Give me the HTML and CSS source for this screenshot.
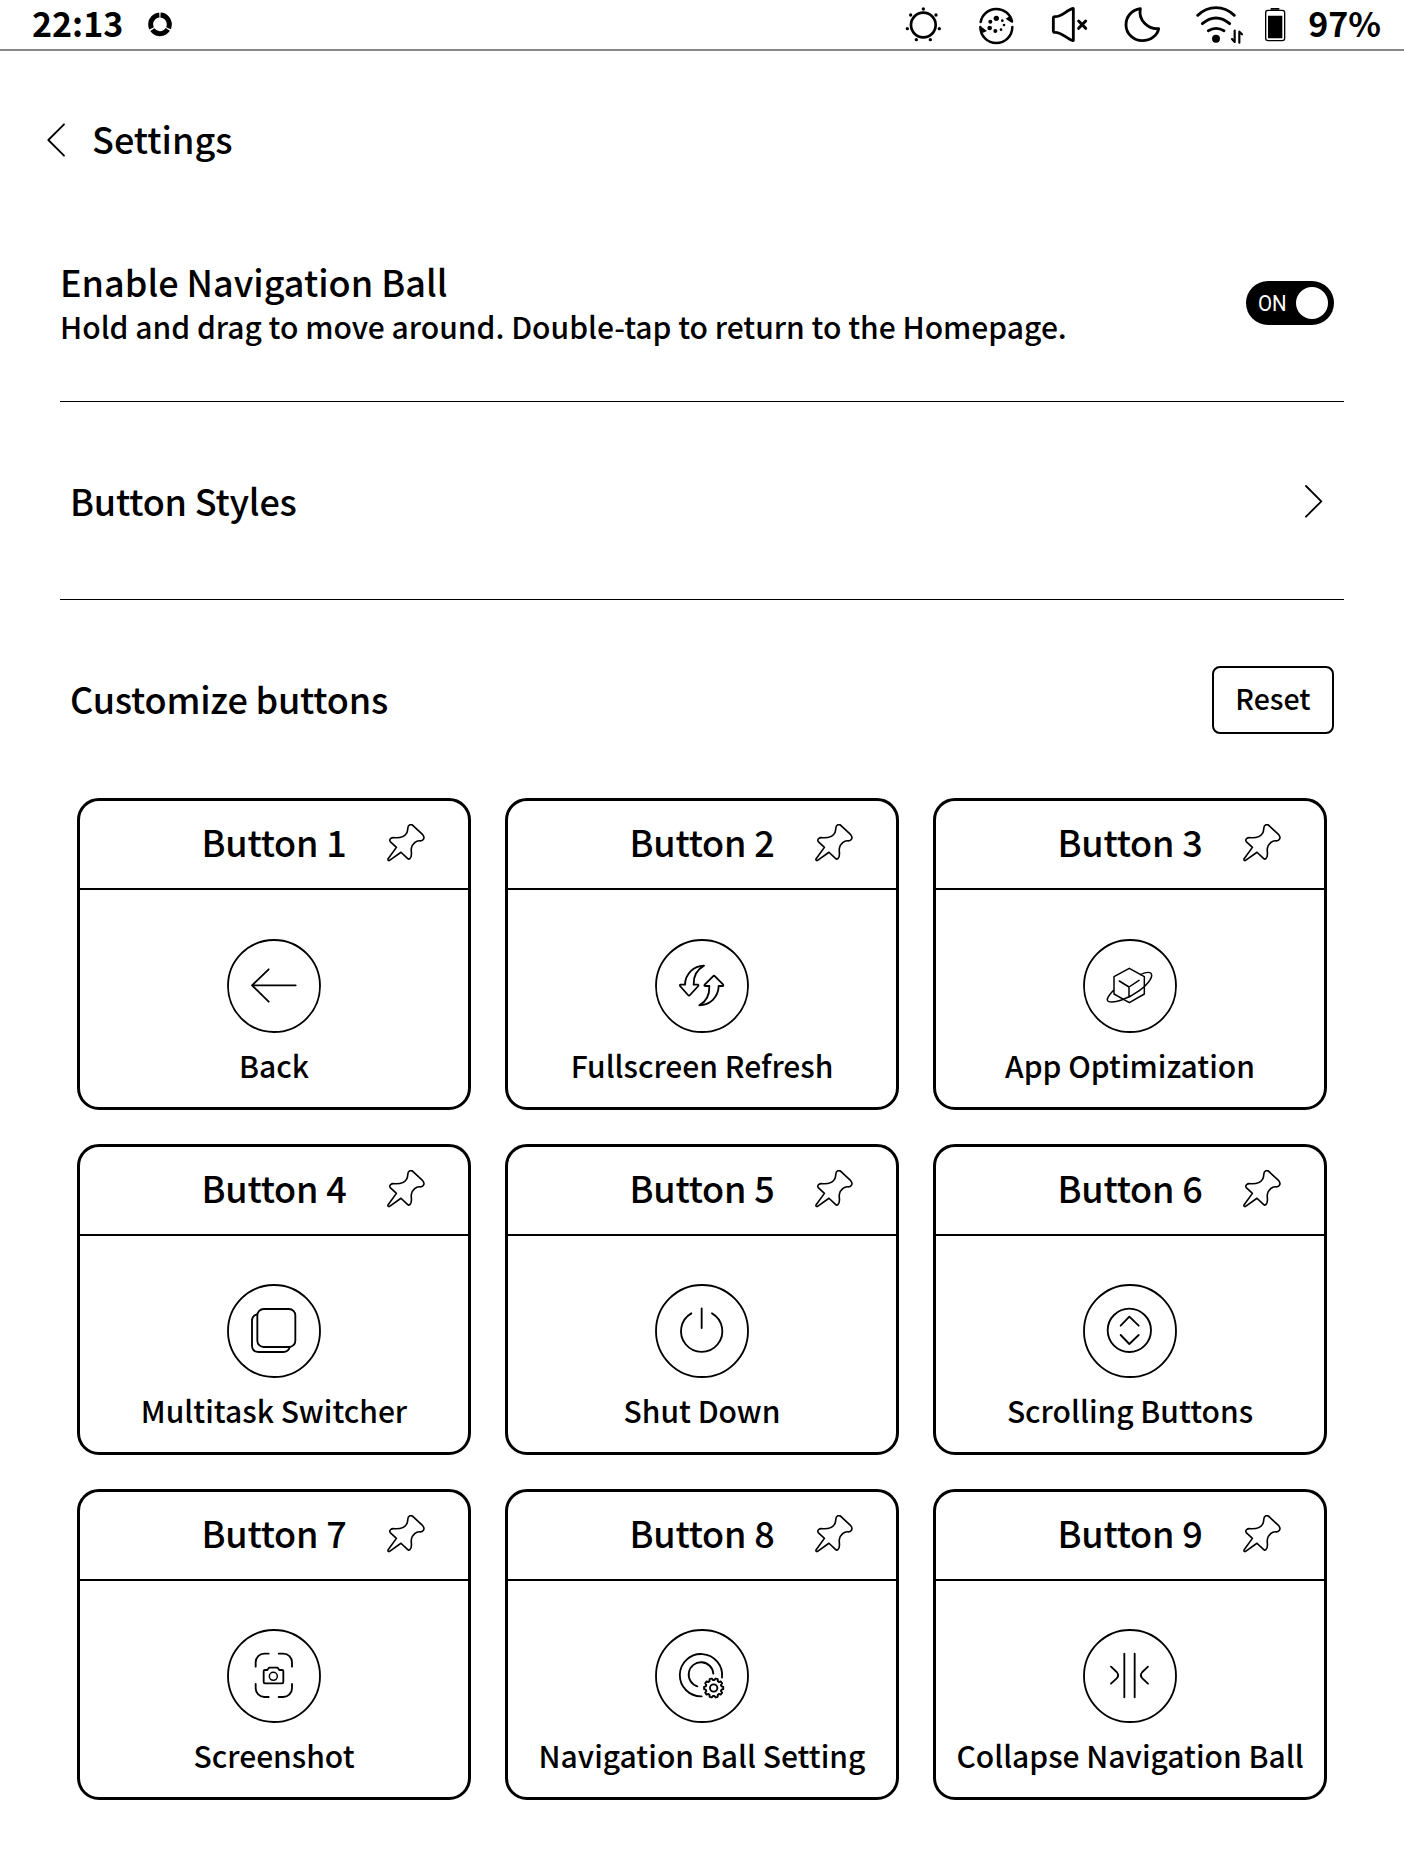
FILE: index.html
```html
<!DOCTYPE html>
<html lang="en">
<head>
<meta charset="utf-8">
<title>Navigation Ball Settings</title>
<link rel="stylesheet" href="styles.css">
</head>
<body>
<svg class="defs" width="0" height="0" aria-hidden="true">
  <symbol id="pin" viewBox="0 0 117 117"><path d="M64 14C64 2 75-2 81 6L110 33C118 42 112 52 103 52C91 49 77 62 75 75C73 87 80 99 70 107Q67 110 63 106L43 87L8 112Q2 114 3 108L29 72L10 54C6 48 12 41 22 42C36 43 53 41 60 29C64 22 63 19 64 14Z"/></symbol>
  <path id="tooth" d="M0-24L2.5-23.9L5.5-28.5L12.3-26.3L12-20.8L14.1-19.4"/>
</svg>

<header class="status">
  <span class="time">22:13</span>
  <svg class="ring" width="28" height="49" viewBox="439 0 84 147"><circle cx="481" cy="73" r="28" pathLength="120" stroke-width="15" stroke-dasharray="37 3" transform="rotate(-87 481 73)"/></svg>
  <div class="tray">
    <svg width="50" height="49" viewBox="30 0 150 147"><circle cx="100" cy="75" r="37" stroke-width="8"/><g class="solid"><circle cx="100" cy="27" r="5"/><circle cx="138" cy="45" r="5"/><circle cx="148" cy="86" r="5"/><circle cx="121" cy="119" r="5"/><circle cx="79" cy="119" r="5"/><circle cx="52" cy="86" r="5"/><circle cx="62" cy="45" r="5"/></g></svg>
    <svg width="45" height="49" viewBox="255 0 135 147"><path stroke-width="7.500" d="M272 66A48 48 0 0 1 366 64M271 81A48 48 0 0 0 367 81"/><g class="solid"><path d="M347 56L360 48L369 68L362 67ZM270 82L276 82L291 93L278 99Z"/><circle cx="319" cy="55" r="8"/><circle cx="301" cy="65" r="6"/><circle cx="337" cy="62" r="4"/><circle cx="342" cy="75" r="4"/><circle cx="333" cy="89" r="4"/><circle cx="316" cy="93" r="6"/><circle cx="299" cy="84" r="7"/></g></svg>
    <svg width="45" height="49" viewBox="465 0 135 147"><path stroke-width="8.500" d="M490 55Q490 50 495 50C512 50 523 38 538 30Q550 24 550 26V121Q550 124 538 117C523 108 512 97 495 97Q490 97 490 92Z"/><path stroke-width="9" d="M566 63L587 85M587 63L566 85"/></svg>
    <svg width="50" height="49" viewBox="675 0 150 147"><path stroke-width="8.500" d="M751 26C724 30 708 51 708 74C708 101 730 122 757 122C782 122 802 106 806 86C776 89 744 62 751 26Z"/></svg>
    <svg width="50" height="49" viewBox="900 0 150 147"><path stroke-width="8.500" d="M923 46Q948 23 978 23Q1008 23 1033 46M937 71Q957 54 978 54Q999 54 1019 71M955 92Q978 78 1002 92"/><circle class="solid" cx="978" cy="116" r="12"/><path stroke-width="6.500" d="M1034 92V126L1026 117M1048 128V95L1056 103"/></svg>
    <svg width="22" height="49" viewBox="1125 0 66 147"><rect x="1127" y="31" width="57" height="91" rx="7" stroke-width="4"/><path class="solid" d="M1134 47H1177V115H1134ZM1142 24H1168V29H1142Z"/></svg>
    <span class="battery">97%</span>
  </div>
</header>

<nav class="titlebar">
  <svg width="20" height="34" viewBox="0 0 60 102"><path stroke-width="5.500" d="M54 4L7 51L54 98"/></svg>
  <h1>Settings</h1>
</nav>

<main>
  <section class="row enable">
    <div>
      <h2>Enable Navigation Ball</h2>
      <p>Hold and drag to move around. Double-tap to return to the Homepage.</p>
    </div>
    <div class="toggle"><span>ON</span><i></i></div>
  </section>
  <section class="row styles">
    <h2>Button Styles</h2>
    <svg width="20" height="34" viewBox="0 0 60 102"><path stroke-width="5.500" d="M6 6L52 52L6 98"/></svg>
  </section>
  <section class="row customize">
    <h2>Customize buttons</h2>
    <button class="reset">Reset</button>
  </section>

  <section class="grid">
    <article class="card">
      <header><h3>Button 1</h3><svg class="pin"><use href="#pin"/></svg></header>
      <svg class="glyph" viewBox="0 0 282 282"><circle cx="141" cy="141" r="138"/><path d="M206 139H75M125 91L75 139L125 188"/></svg>
      <p>Back</p>
    </article>
    <article class="card">
      <header><h3>Button 2</h3><svg class="pin"><use href="#pin"/></svg></header>
      <svg class="glyph" viewBox="0 0 282 282"><circle cx="141" cy="141" r="138"/><path d="M147 80C116 81 91 104 90 137H76Q74 138 75 141L99 168Q102 172 105 168L130 141Q131 138 129 137H116C115 112 124 93 147 80ZM133 199C155 187 164 167 163 141H150Q147 140 149 137L174 112Q177 109 180 112L204 136Q206 139 204 141H191C190 175 165 198 133 199Z"/></svg>
      <p>Fullscreen Refresh</p>
    </article>
    <article class="card">
      <header><h3>Button 3</h3><svg class="pin"><use href="#pin"/></svg></header>
      <svg class="glyph" viewBox="0 0 282 282"><circle cx="141" cy="141" r="138"/><path class="fine" d="M139 88L184 113V165L139 191L93 165V113ZM109 126L138 144L168 124M138 144V175M93 152C76 170 68 182 76 187C92 194 135 180 170 154C200 132 212 110 203 102C197 98 185 101 172 107"/></svg>
      <p>App Optimization</p>
    </article>
    <article class="card">
      <header><h3>Button 4</h3><svg class="pin"><use href="#pin"/></svg></header>
      <svg class="glyph" viewBox="0 0 282 282"><circle cx="141" cy="141" r="138"/><rect x="91" y="75" width="114" height="114" rx="19"/><path d="M90 91Q75 95 75 111V184Q75 204 95 204H169Q184 204 188 190"/></svg>
      <p>Multitask Switcher</p>
    </article>
    <article class="card">
      <header><h3>Button 5</h3><svg class="pin"><use href="#pin"/></svg></header>
      <svg class="glyph" viewBox="0 0 282 282"><circle cx="141" cy="141" r="138"/><path d="M140 73V132M109 88A62 62 0 1 0 171 88"/></svg>
      <p>Shut Down</p>
    </article>
    <article class="card">
      <header><h3>Button 6</h3><svg class="pin"><use href="#pin"/></svg></header>
      <svg class="glyph" viewBox="0 0 282 282"><circle cx="141" cy="141" r="138"/><circle cx="139" cy="139" r="65"/><path d="M113 125L139 98L167 125M113 153L139 180L167 153"/></svg>
      <p>Scrolling Buttons</p>
    </article>
    <article class="card">
      <header><h3>Button 7</h3><svg class="pin"><use href="#pin"/></svg></header>
      <svg class="glyph" viewBox="0 0 282 282"><circle cx="141" cy="141" r="138"/><path d="M125 74H112A26 26 0 0 0 86 100V113M155 74H169A26 26 0 0 1 195 100V113M86 165V178A26 26 0 0 0 112 204H125M155 204H169A26 26 0 0 0 195 178V165"/><path d="M114 123H121L126 116H152L157 123H165Q169 123 169 127V159Q169 163 165 163H114Q110 163 110 159V127Q110 123 114 123Z"/><circle class="fine" cx="139" cy="142" r="12"/></svg>
      <p>Screenshot</p>
    </article>
    <article class="card">
      <header><h3>Button 8</h3><svg class="pin"><use href="#pin"/></svg></header>
      <svg class="glyph" viewBox="0 0 282 282"><circle cx="141" cy="141" r="138"/><path d="M201 146A63.500 63.500 0 1 0 140 202M175 134A37 37 0 1 0 127 172"/><g transform="translate(176 177)"><circle r="11"/><use href="#tooth"/><use href="#tooth" transform="rotate(36)"/><use href="#tooth" transform="rotate(72)"/><use href="#tooth" transform="rotate(108)"/><use href="#tooth" transform="rotate(144)"/><use href="#tooth" transform="rotate(180)"/><use href="#tooth" transform="rotate(216)"/><use href="#tooth" transform="rotate(252)"/><use href="#tooth" transform="rotate(288)"/><use href="#tooth" transform="rotate(324)"/></g></svg>
      <p>Navigation Ball Setting</p>
    </article>
    <article class="card">
      <header><h3>Button 9</h3><svg class="pin"><use href="#pin"/></svg></header>
      <svg class="glyph" viewBox="0 0 282 282"><circle cx="141" cy="141" r="138"/><path d="M124 74V205M155 74V205M84 113L101 129Q110 139 101 148L84 164M195 113L178 129Q169 139 178 148L195 164"/></svg>
      <p>Collapse Navigation Ball</p>
    </article>
  </section>
</main>
</body>
</html>
```
FILE: styles.css
```css
* { box-sizing: border-box; margin: 0; padding: 0; }
body {
  width: 1404px;
  height: 1872px;
  overflow: hidden;
  background: #fff;
  color: #000;
  font-family: "Noto Sans CJK SC", "Noto Sans", sans-serif;
  font-weight: 500;
}
svg { fill: none; stroke: #000; stroke-linecap: round; stroke-linejoin: round; flex: none; display: block; }
svg .solid { fill: #000; stroke: none; }
.defs { position: absolute; }

.status {
  height: 51px;
  border-bottom: 2px solid #888;
  display: flex;
  align-items: center;
  padding: 0 23px 0 32px;
  font-size: 34px;
  font-weight: 700;
  line-height: 44px;
}
.status span { padding-bottom: 4px; }
.ring { margin-left: 23px; }
.ring circle { stroke-linecap: butt; }
.tray { margin-left: auto; display: flex; align-items: center; gap: 25px; }
.tray svg { overflow: visible; }
.battery { margin-left: -4px; }

.titlebar { height: 172px; display: flex; align-items: center; padding-left: 46px; }
.titlebar svg { margin-top: 5px; }
h1, h2, h3 { font-size: 36px; font-weight: 500; line-height: 45px; white-space: nowrap; }
.titlebar h1 { margin: 2px 0 0 26px; }

.row { margin: 0 60px; display: flex; justify-content: space-between; }
.enable { height: 179px; padding: 36px 10px 0 0; border-bottom: 1px solid #000; }
.enable p { font-size: 30px; line-height: 45px; }
.toggle {
  width: 88px; height: 44px; margin-top: 22px; padding: 0 6px 0 12px;
  border-radius: 22px; background: #000; color: #fff;
  display: flex; align-items: center; justify-content: space-between;
  font-family: Roboto, sans-serif; font-size: 22px; font-weight: 400; line-height: 44px;
}
.toggle span { padding-top: 1px; transform: scaleX(0.93); transform-origin: left; }
.toggle i { width: 32px; height: 32px; border-radius: 50%; background: #fff; }
.styles { height: 198px; padding: 0 20px 0 10px; align-items: center; border-bottom: 1px solid #000; }
.styles h2, .customize h2 { letter-spacing: -0.2px; }
.customize { height: 198px; padding: 66px 10px 0; }
.customize h2 { margin-top: 10px; }
.reset {
  width: 122px; height: 68px; padding-bottom: 4px;
  border: 2px solid #000; border-radius: 8px; background: #fff; color: #000;
  font: inherit; font-size: 28.5px; line-height: 40px;
}

.grid {
  display: grid;
  grid-template-columns: repeat(3, 394px);
  grid-template-rows: 312px 311px 311px;
  gap: 34px;
  padding-left: 77px;
}
.card {
  border: 3px solid #000; border-radius: 22px;
  display: flex; flex-direction: column; align-items: center;
}
.card header {
  width: 100%; height: 89px; border-bottom: 2px solid #000;
  display: grid; grid-template-columns: 1fr auto 1fr; align-items: center; padding: 0 43px;
}
.card h3 { grid-column: 2; margin-top: -6px; letter-spacing: -0.2px; }
.pin { width: 38px; height: 38px; justify-self: end; margin-top: -3px; stroke-width: 5; overflow: visible; }
.glyph { width: 94px; height: 94px; margin-top: auto; stroke-width: 5.5; }
.glyph .fine { stroke-width: 4.5; }
.card p { margin: 12px 0 22px; font-size: 30px; line-height: 40px; white-space: nowrap; }
```
